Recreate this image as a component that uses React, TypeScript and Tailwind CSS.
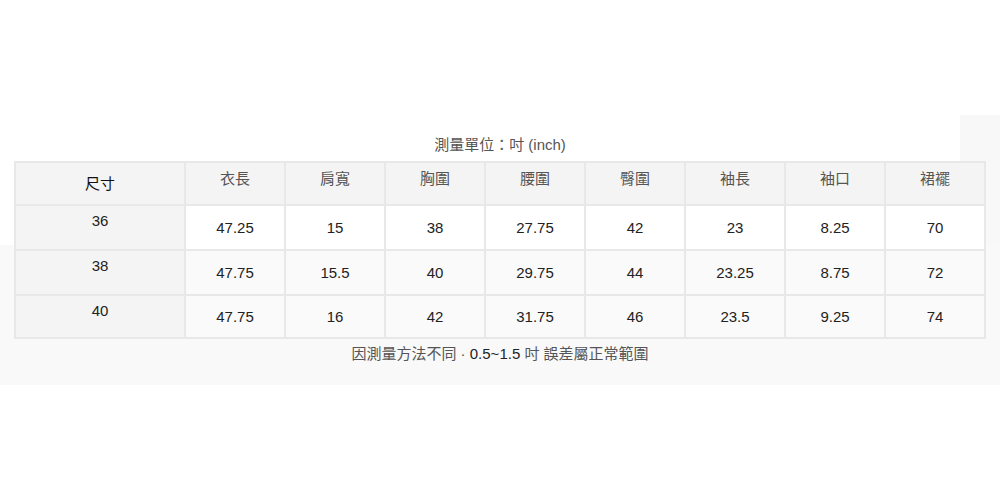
const headers = ["衣長", "肩寬", "胸圍", "腰圍", "臀圍", "袖長", "袖口", "裙襬"];

const rows: { size: string; values: string[]; white?: boolean; h: string }[] = [
  { size: "36", values: ["47.25", "15", "38", "27.75", "42", "23", "8.25", "70"], white: true, h: "h-[45px]" },
  { size: "38", values: ["47.75", "15.5", "40", "29.75", "44", "23.25", "8.75", "72"], h: "h-[45px]" },
  { size: "40", values: ["47.75", "16", "42", "31.75", "46", "23.5", "9.25", "74"], h: "h-[43px]" },
];

const cell = "border-2 border-[#e8e8e8] text-center";

export default function App() {
  return (
    <div
      className="w-[1000px] h-[500px] flex flex-col items-center pt-[135px] text-[15px] leading-5 text-[#555] [font-family:'Liberation_Sans','Noto_Sans_CJK_TC',sans-serif] [background:linear-gradient(#f8f8f8,#f8f8f8)_960px_115px/40px_130px_no-repeat,linear-gradient(#f9f9f9,#f9f9f9)_0_245px/100%_140px_no-repeat,#fff]"
    >
      <div className="h-5 mb-[6px]">測量單位：吋 (inch)</div>
      <table className="w-[972px] border-collapse table-fixed">
        <colgroup>
          <col className="w-[170px]" />
          {headers.map((h) => (
            <col key={h} className="w-[100px]" />
          ))}
        </colgroup>
        <thead>
          <tr className="h-[43px] bg-[#f4f4f4]">
            <th className={`${cell} align-middle font-normal text-[#111]`}>尺寸</th>
            {headers.map((h) => (
              <th key={h} className={`${cell} align-top pt-[6px] font-normal`}>
                {h}
              </th>
            ))}
          </tr>
        </thead>
        <tbody>
          {rows.map((r) => (
            <tr key={r.size} className={`${r.h} text-[#222]`}>
              <td className={`${cell} align-top pt-[5px] bg-[#f4f4f4]`}>{r.size}</td>
              {r.values.map((v, i) => (
                <td
                  key={i}
                  className={`${cell} align-middle ${r.white ? "bg-white" : "bg-[#fafafa]"}`}
                >
                  {v}
                </td>
              ))}
            </tr>
          ))}
        </tbody>
      </table>
      <div className="mt-[5px] h-5">
        因測量方法不同 · <span className="text-[#222]">0.5~1.5</span> 吋 誤差屬正常範圍
      </div>
    </div>
  );
}
